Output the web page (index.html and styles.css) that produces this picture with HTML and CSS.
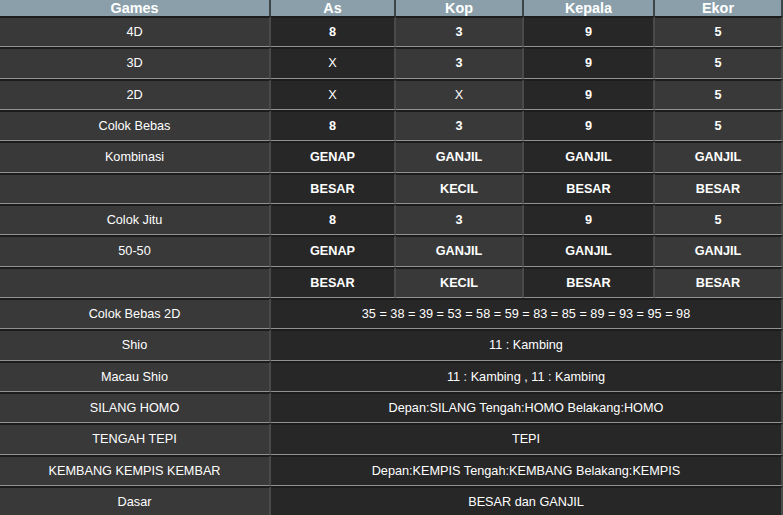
FILE: index.html
```html
<!DOCTYPE html>
<html>
<head>
<meta charset="utf-8">
<link rel="stylesheet" href="styles.css">
</head>
<body>
<table class="result">
  <thead>
    <tr>
      <th class="c-games">Games</th>
      <th class="c-as">As</th>
      <th class="c-kop">Kop</th>
      <th class="c-kepala">Kepala</th>
      <th class="c-ekor">Ekor</th>
    </tr>
  </thead>
  <tbody>
    <tr><td class="lt">4D</td><td class="dk b">8</td><td class="lt b">3</td><td class="dk b">9</td><td class="lt b">5</td></tr>
    <tr><td class="lt">3D</td><td class="dk">X</td><td class="lt b">3</td><td class="dk b">9</td><td class="lt b">5</td></tr>
    <tr><td class="lt">2D</td><td class="dk">X</td><td class="lt">X</td><td class="dk b">9</td><td class="lt b">5</td></tr>
    <tr><td class="lt">Colok Bebas</td><td class="dk b">8</td><td class="lt b">3</td><td class="dk b">9</td><td class="lt b">5</td></tr>
    <tr><td class="lt">Kombinasi</td><td class="dk b">GENAP</td><td class="lt b">GANJIL</td><td class="dk b">GANJIL</td><td class="lt b">GANJIL</td></tr>
    <tr><td class="lt"></td><td class="dk b">BESAR</td><td class="lt b">KECIL</td><td class="dk b">BESAR</td><td class="lt b">BESAR</td></tr>
    <tr><td class="lt">Colok Jitu</td><td class="dk b">8</td><td class="lt b">3</td><td class="dk b">9</td><td class="lt b">5</td></tr>
    <tr><td class="lt">50-50</td><td class="dk b">GENAP</td><td class="lt b">GANJIL</td><td class="dk b">GANJIL</td><td class="lt b">GANJIL</td></tr>
    <tr><td class="lt"></td><td class="dk b">BESAR</td><td class="lt b">KECIL</td><td class="dk b">BESAR</td><td class="lt b">BESAR</td></tr>
    <tr><td class="lt">Colok Bebas 2D</td><td class="dk wide" colspan="4">35 = 38 = 39 = 53 = 58 = 59 = 83 = 85 = 89 = 93 = 95 = 98</td></tr>
    <tr><td class="lt">Shio</td><td class="dk wide" colspan="4">11 : Kambing</td></tr>
    <tr><td class="lt">Macau Shio</td><td class="dk wide" colspan="4">11 : Kambing , 11 : Kambing</td></tr>
    <tr><td class="lt">SILANG HOMO</td><td class="dk wide" colspan="4">Depan:SILANG Tengah:HOMO Belakang:HOMO</td></tr>
    <tr><td class="lt">TENGAH TEPI</td><td class="dk wide" colspan="4">TEPI</td></tr>
    <tr><td class="lt">KEMBANG KEMPIS KEMBAR</td><td class="dk wide" colspan="4">Depan:KEMPIS Tengah:KEMBANG Belakang:KEMPIS</td></tr>
    <tr><td class="lt">Dasar</td><td class="dk wide" colspan="4">BESAR dan GANJIL</td></tr>
  </tbody>
</table>
</body>
</html>
```

FILE: styles.css
```css
html, body {
  margin: 0;
  padding: 0;
  background: #1c1c1c;
}

.result {
  width: 783px;
  table-layout: fixed;
  border-collapse: separate;
  border-spacing: 0;
  font-family: "Liberation Sans", Arial, sans-serif;
  color: #ffffff;
}

.result th,
.result td {
  box-sizing: border-box;
  text-align: center;
  padding: 0 4px;
  border-right: 2px solid #4a4a4a;
  white-space: nowrap;
}

.result th {
  height: 16px;
  line-height: 16px;
  font-size: 14.4px;
  font-weight: bold;
  background: #8a9faa;
  border-right-color: #3e4548;
}

.c-games { width: 271px; }
.c-as { width: 125px; }
.c-kop { width: 128px; }
.c-kepala { width: 131px; }
.c-ekor { width: 128px; }

.result td {
  font-size: 12.7px;
  line-height: 28.33px;
  border-top: 2px solid #1c1c1c;
  border-bottom: 1px solid #929292;
}

.result td.lt { background: #393939; }
.result td.dk { background: #272727; }
.result td.b { font-weight: bold; }
```
